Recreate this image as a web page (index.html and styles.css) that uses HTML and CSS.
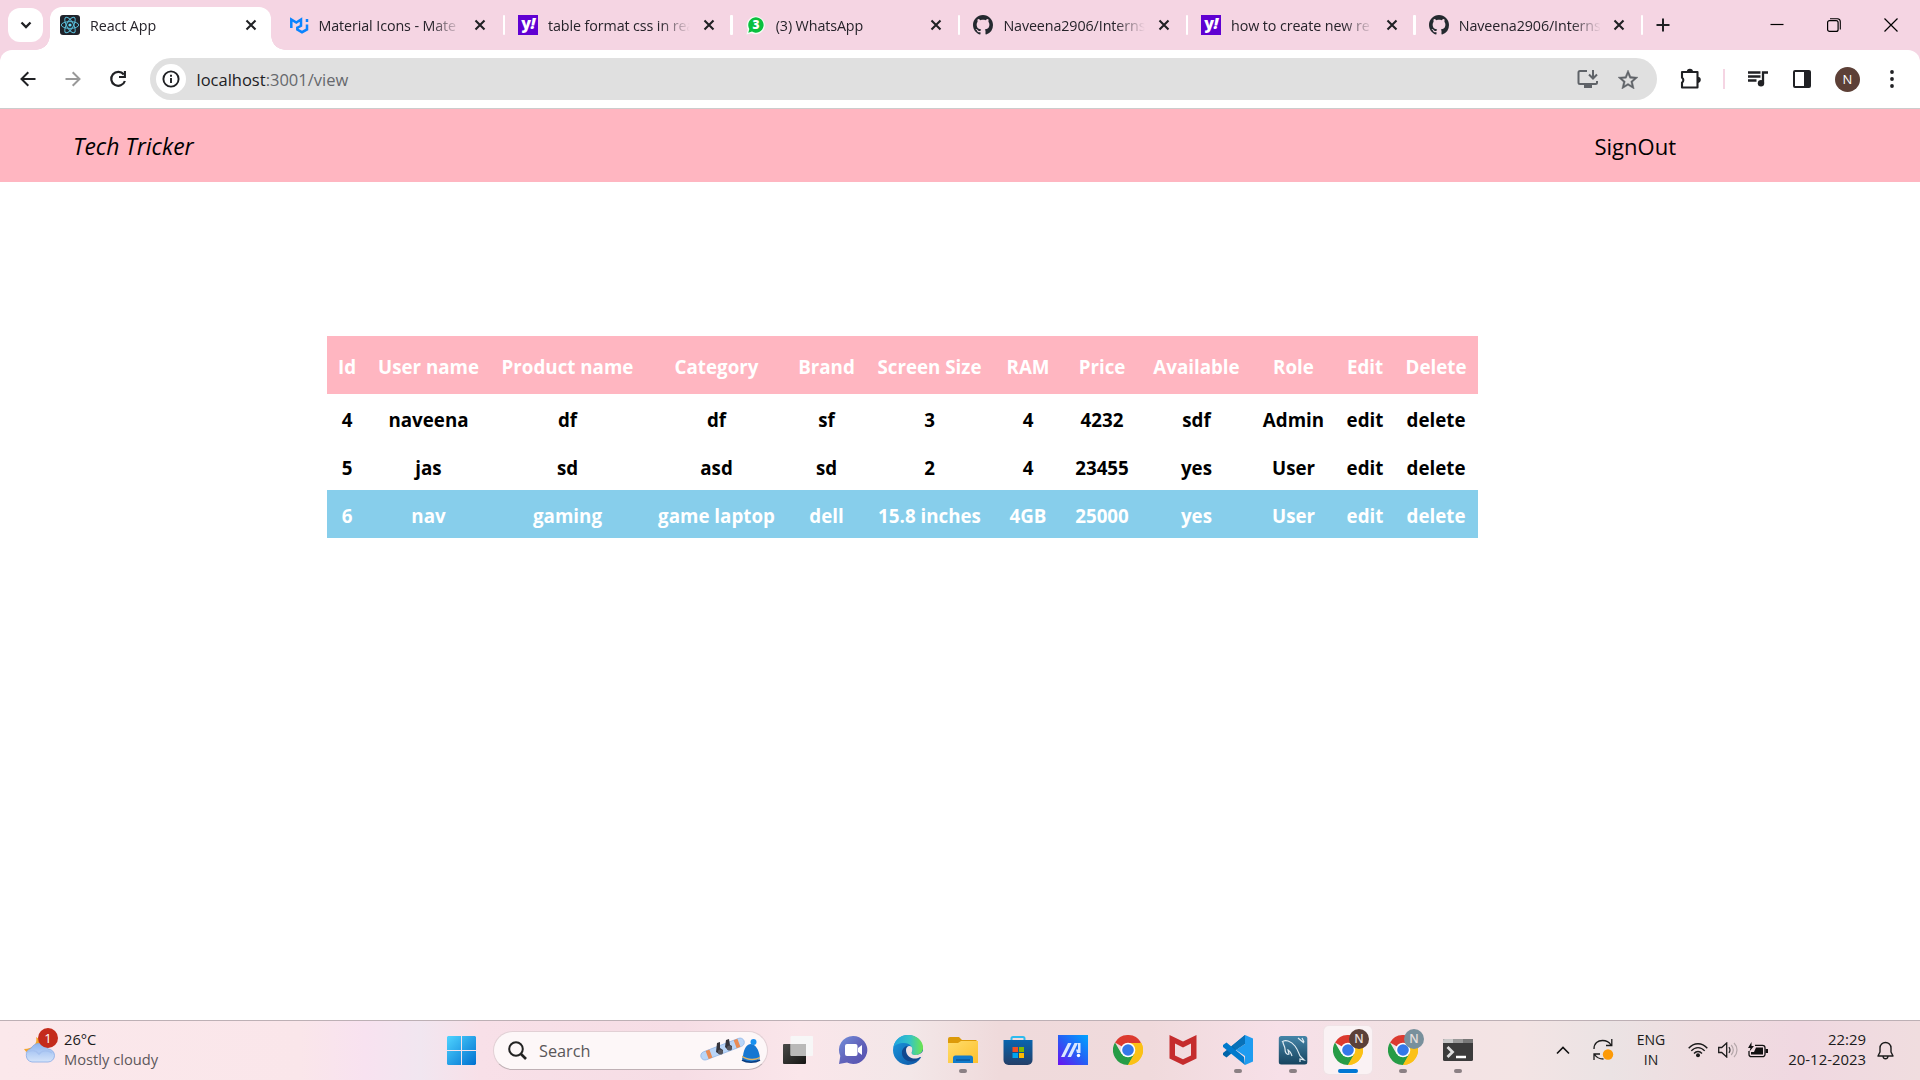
FILE: index.html
```html
<!DOCTYPE html>
<html lang="en">
<head>
<meta charset="utf-8">
<title>React App</title>
<link rel="stylesheet" href="styles.css">
</head>
<body>
<svg class="defs" width="0" height="0" aria-hidden="true">
  <linearGradient id="edgeA" x1="0" y1="0" x2="1" y2="0"><stop offset="0" stop-color="#1fa4e0"/><stop offset=".55" stop-color="#35c4c6"/><stop offset="1" stop-color="#6ee64a"/></linearGradient>
  <linearGradient id="edgeB" x1="0" y1="0" x2="1" y2="1"><stop offset="0" stop-color="#1b9de2"/><stop offset="1" stop-color="#0d4fa0"/></linearGradient>
  <linearGradient id="win" x1="0" y1="0" x2="1" y2="1"><stop offset="0" stop-color="#4fd4ff"/><stop offset="1" stop-color="#0070d0"/></linearGradient>
  <linearGradient id="cloud" x1="0" y1="0" x2="0" y2="1"><stop offset="0" stop-color="#8fb5ef"/><stop offset="1" stop-color="#d5e4fa"/></linearGradient>
  <linearGradient id="chat" x1="0" y1="0" x2="1" y2="1"><stop offset="0" stop-color="#7391dc"/><stop offset=".5" stop-color="#6264bb"/><stop offset="1" stop-color="#5650b0"/></linearGradient>
  <linearGradient id="folder" x1="0" y1="0" x2="1" y2="1"><stop offset="0" stop-color="#ffdc6b"/><stop offset="1" stop-color="#fdc02c"/></linearGradient>
  <linearGradient id="store" x1="0" y1="0" x2="0" y2="1"><stop offset="0" stop-color="#0864ae"/><stop offset="1" stop-color="#243f68"/></linearGradient>
  <linearGradient id="asus" x1="1" y1="0" x2="0" y2="1"><stop offset="0" stop-color="#00a5ff"/><stop offset=".5" stop-color="#2460f5"/><stop offset="1" stop-color="#6a10f0"/></linearGradient>
  <linearGradient id="sql" x1="0" y1="0" x2="0" y2="1"><stop offset="0" stop-color="#4585a8"/><stop offset="1" stop-color="#17445f"/></linearGradient>
  <linearGradient id="dark" x1="0" y1="0" x2="1" y2="1"><stop offset="0" stop-color="#4a4a48"/><stop offset="1" stop-color="#161614"/></linearGradient>
  <symbol id="x" viewBox="0 0 12 12"><path d="M1.5 1.5l9 9M10.500 1.500l-9 9" stroke="#202124" stroke-width="2.100"/></symbol>
  <symbol id="github" viewBox="0 0 16 16"><path fill="#24292f" d="M8 0C3.580 0 0 3.580 0 8c0 3.540 2.290 6.530 5.470 7.590.4.070.55-.17.55-.38 0-.19-.01-.82-.01-1.490-2.010.37-2.530-.49-2.690-.94-.09-.23-.48-.94-.82-1.130-.28-.15-.68-.52-.01-.53.63-.01 1.080.58 1.230.82.72 1.210 1.870.87 2.330.66.070-.52.28-.87.51-1.070-1.780-.2-3.640-.89-3.640-3.950 0-.87.31-1.590.82-2.150-.08-.2-.36-1.020.08-2.120 0 0 .67-.21 2.200.82.64-.18 1.320-.27 2-.27s1.360.09 2 .27c1.530-1.040 2.200-.82 2.200-.82.44 1.100.16 1.920.08 2.120.51.56.82 1.270.82 2.150 0 3.070-1.870 3.750-3.650 3.950.29.25.54.73.54 1.480 0 1.070-.01 1.930-.01 2.200 0 .21.15.46.55.38A8.010 8.010 0 0 0 16 8c0-4.420-3.580-8-8-8z"/></symbol>
  <symbol id="chrome" viewBox="0 0 30 30">
    <path fill="#dc3a2f" d="M15 15L2 7.500A15 15 0 0 1 28 7.500z"/><path fill="#fbc116" d="M15 15L28 7.500A15 15 0 0 1 15 30z"/><path fill="#269c46" d="M2 7.500A15 15 0 0 0 15 30L21.500 18.700 8.500 18.700z"/>
    <path fill="#dc3a2f" d="M15 8h13.260L25 8z"/><path fill="#fbc116" d="M15 8h13.300A15 15 0 0 1 15 30l6.300-11z"/>
    <circle cx="15" cy="15" r="7.300" fill="#fff"/><circle cx="15" cy="15" r="5.800" fill="#3478e8"/></symbol>
</svg>

<div class="tabstrip">
  <button class="tab-search"><svg width="12" height="8" viewBox="0 0 12 8"><path d="M1.500 1.500L6 6l4.500-4.500" fill="none" stroke="#202124" stroke-width="2.300"/></svg></button>
  <div class="tab active">
    <svg class="fav" viewBox="0 0 20 20"><rect width="20" height="20" rx="3" fill="#20232a"/><g fill="none" stroke="#58b9d4" stroke-width="1"><ellipse cx="10" cy="10" rx="8.700" ry="3.400"/><ellipse cx="10" cy="10" rx="8.700" ry="3.400" transform="rotate(60 10 10)"/><ellipse cx="10" cy="10" rx="8.700" ry="3.400" transform="rotate(120 10 10)"/></g><circle cx="10" cy="10" r="1.600" fill="#61dafb"/></svg>
    <span class="title">React App</span><svg class="close"><use href="#x"/></svg>
  </div>
  <div class="tab mui">
    <svg class="fav" viewBox="0 0 20 20"><g fill="none" stroke="#0a84ff" stroke-width="2.500"><path d="M2.300 13V4.500l5 3 4.700-3v6.300L8 13"/><path d="M8.300 11.800v2.700l4.700 2.700 5-2.800V9.500"/><path d="M18 4v3"/></g></svg>
    <span class="title">Material Icons - Mate</span><svg class="close"><use href="#x"/></svg>
  </div>
  <div class="tab">
    <span class="fav yahoo">y<i>!</i></span>
    <span class="title">table format css in rea</span><svg class="close"><use href="#x"/></svg>
  </div>
  <div class="tab">
    <span class="fav"><svg width="20" height="20" viewBox="0 0 20 20"><path d="M.5 19.500l1.300-5A9 9 0 1 1 5.500 18.200z" fill="#f4fff6"/><path d="M2.300 17.700l1-3.800a7.700 7.700 0 1 1 2.700 2.700z" fill="#0ac03f"/><text x="10" y="14.300" text-anchor="middle" class="wa">3</text></svg></span>
    <span class="title">(3) WhatsApp</span><svg class="close"><use href="#x"/></svg>
  </div>
  <div class="tab">
    <svg class="fav"><use href="#github"/></svg>
    <span class="title">Naveena2906/Interns</span><svg class="close"><use href="#x"/></svg>
  </div>
  <div class="tab">
    <span class="fav yahoo">y<i>!</i></span>
    <span class="title">how to create new re</span><svg class="close"><use href="#x"/></svg>
  </div>
  <div class="tab">
    <svg class="fav"><use href="#github"/></svg>
    <span class="title">Naveena2906/Interns</span><svg class="close"><use href="#x"/></svg>
  </div>
  <svg class="plus" width="14" height="14"><path d="M7 .5v13M.5 7h13" stroke="#202124" stroke-width="2"/></svg>
  <div class="window-buttons">
    <svg width="14" height="14"><path d="M.5 6.500h13" stroke="#000" stroke-width="1.200"/></svg>
    <svg width="14" height="14"><rect x=".6" y="2.600" width="10.500" height="10.800" rx="2" fill="none" stroke="#000" stroke-width="1.200"/><path d="M3 .7h7.500a3 3 0 0 1 2.800 3V11.500" fill="none" stroke="#000" stroke-width="1.100"/></svg>
    <svg width="14" height="14"><path d="M.5.5l13 13M13.500.5l-13 13" stroke="#000" stroke-width="1.200"/></svg>
  </div>
</div>

<div class="toolbar">
  <div class="nav">
    <svg width="16" height="16"><path d="M15.500 8H2M8.300 1.200L1.500 8l6.800 6.800" fill="none" stroke="#202124" stroke-width="2"/></svg>
    <svg width="16" height="16"><path d="M.5 8H14M7.700 1.200L14.500 8l-6.800 6.800" fill="none" stroke="#999" stroke-width="2"/></svg>
    <svg width="18" height="18"><path d="M14.800 4.500A7 7 0 1 0 15.900 11" fill="none" stroke="#202124" stroke-width="2.200"/><path d="M15.900 1v6H10" fill="none" stroke="#202124" stroke-width="2.100"/></svg>
  </div>
  <div class="omnibox">
    <span class="site-info"><svg width="18" height="18"><circle cx="9" cy="9" r="7.600" fill="none" stroke="#202124" stroke-width="1.900"/><path d="M9 8v5M9 4.700v2" stroke="#202124" stroke-width="1.900"/></svg></span>
    <span class="url"><b>localhost</b>:3001/view</span>
    <svg width="22" height="20"><path d="M10 2H3a1.500 1.500 0 0 0-1.500 1.500v10A1.500 1.500 0 0 0 3 15h15.500a1.500 1.500 0 0 0 1.500-1.500V12" fill="none" stroke="#5f6368" stroke-width="2"/><path d="M7 15h8v4H7z" fill="#5f6368"/><path d="M16 1v8M12 5.500l4 4 4-4" fill="none" stroke="#5f6368" stroke-width="2"/></svg>
    <svg width="20" height="19" viewBox="2 2 20 19"><path fill="#5f6368" stroke="#5f6368" stroke-width=".4" d="M22 9.240l-7.190-.62L12 2 9.190 8.630 2 9.240l5.460 4.730L5.820 21 12 17.270 18.180 21l-1.630-7.030L22 9.240zM12 15.400l-3.760 2.270 1-4.280-3.320-2.880 4.380-.38L12 6.100l1.710 4.040 4.380.38-3.320 2.880 1 4.280L12 15.400z"/></svg>
  </div>
  <div class="actions">
    <svg width="22" height="22"><path d="M3.500 4H17.500V19.500H2v-5a3 3 0 0 0 0-5V4z" fill="none" stroke="#202124" stroke-width="2.100" stroke-linejoin="round"/><path d="M6.800 4a3.100 3.300 0 0 1 6.200 0zM17.500 8.700a3.300 3.100 0 0 1 0 6.200z" fill="#202124"/></svg>
    <i class="rule"></i>
    <svg width="20" height="16"><path d="M0 1.500h12.500M0 5.500h12.500M0 9.500h8.500" stroke="#202124" stroke-width="2.300"/><path d="M15 12V1.500h5" fill="none" stroke="#202124" stroke-width="2.300"/><circle cx="13" cy="12.200" r="3.200" fill="#202124"/></svg>
    <svg width="18" height="18"><rect x="1" y="1" width="16" height="16" rx="1" fill="none" stroke="#202124" stroke-width="2"/><path d="M11 1h6v16h-6z" fill="#202124"/></svg>
    <span class="avatar">N</span>
    <svg width="4" height="18"><g fill="#202124"><circle cx="2" cy="2" r="1.900"/><circle cx="2" cy="9" r="1.900"/><circle cx="2" cy="16" r="1.900"/></g></svg>
  </div>
</div>

<main>
  <header class="site-header"><em class="brand">Tech Tricker</em><a class="signout">SignOut</a></header>
  <table class="products">
    <colgroup><col class="c1"><col class="c2"><col class="c3"><col class="c4"><col class="c5"><col class="c6"><col class="c7"><col class="c8"><col class="c9"><col class="c10"><col class="c11"><col class="c12"></colgroup>
    <thead><tr><th>Id</th><th>User name</th><th>Product name</th><th>Category</th><th>Brand</th><th>Screen Size</th><th>RAM</th><th>Price</th><th>Available</th><th>Role</th><th>Edit</th><th>Delete</th></tr></thead>
    <tbody>
      <tr><td>4</td><td>naveena</td><td>df</td><td>df</td><td>sf</td><td>3</td><td>4</td><td>4232</td><td>sdf</td><td>Admin</td><td>edit</td><td>delete</td></tr>
      <tr><td>5</td><td>jas</td><td>sd</td><td>asd</td><td>sd</td><td>2</td><td>4</td><td>23455</td><td>yes</td><td>User</td><td>edit</td><td>delete</td></tr>
      <tr class="hover"><td>6</td><td>nav</td><td>gaming</td><td>game laptop</td><td>dell</td><td>15.8 inches</td><td>4GB</td><td>25000</td><td>yes</td><td>User</td><td>edit</td><td>delete</td></tr>
    </tbody>
  </table>
</main>

<footer class="taskbar">
  <div class="weather">
    <span class="weather-icon"><svg width="32" height="32"><path d="M12 4c2 6-3 12-12 12 3 5 8 7 13 4l8-10z" fill="#f3a52b"/><path d="M8 29a7 7 0 0 1-1-13.500A9.500 9.500 0 0 1 24 16a6.500 6.500 0 0 1 0 13z" fill="url(#cloud)" stroke="#86a9e6" stroke-width=".8"/><path d="M2 20c5-4 10-3 13 1 3-4 9-4 13-1" fill="none" stroke="#a5c1ef" stroke-width="1.500"/></svg><b>1</b></span>
    <div class="forecast"><p class="dark">26°C</p><p>Mostly cloudy</p></div>
  </div>
  <div class="center">
    <svg class="start" width="29" height="29"><path fill="url(#win)" d="M1 0h13v14H0V1zM15 0h13l1 1v13H15zM0 15h14v14H1l-1-1zM15 15h14v13l-1 1H15z"/></svg>
    <div class="search">
      <svg width="19" height="19"><circle cx="8" cy="8" r="6.800" fill="none" stroke="#222" stroke-width="2"/><path d="M13 13l5 5" stroke="#222" stroke-width="2.600"/></svg>
      <span>Search</span>
      <svg width="62" height="28"><g transform="rotate(-21 22 13)"><rect x="-.5" y="9" width="46" height="8.500" rx="4.200" fill="#b9d5f8" stroke="#90b4e5" stroke-width=".7"/><path d="M6 9h4v8.500H6zM36 9h4v8.500h-4z" fill="#e98b55"/></g><path d="M17 7l3-1v6l3 2v3l-4 1-3-2zM26 4l3-1 1 6 2 1v3l-4 1-3-3z" fill="#34343c"/><circle cx="20.500" cy="16" r="2.600" fill="#55555e"/><circle cx="29.500" cy="12" r="2.600" fill="#55555e"/><path d="M43 20c1-8 4-12 8-12s8 5 9 14c-5 6-14 5-18 1z" fill="#1677d2"/><circle cx="53.500" cy="6" r="3" fill="#1890f0"/><path d="M42 19.500c4 3.500 13 4.500 18 1v1.500c-5 3.500-14 2.500-18-1z" fill="#dfb568"/><path d="M42 24c5 3 13 3 18 0" stroke="#0b3d80" stroke-width="1.500" fill="none"/></svg>
    </div>
    <div class="apps">
      <span class="app"><svg width="30" height="30"><rect y="9" width="23" height="20" rx="1" fill="url(#dark)"/><rect x="7.500" y="1" width="22.500" height="20" rx="1" fill="#f7f7f7"/><path d="M8 9h15v12H8z" fill="#b9b9b8"/></svg></span>
      <span class="app"><svg width="30" height="30"><path d="M15 1a14 14 0 1 1-6 26.500L1 29l1.300-8A14 14 0 0 1 15 1z" fill="url(#chat)"/><rect x="7" y="9" width="12.500" height="12" rx="2" fill="#fff"/><path d="M20 13l4-3v10l-4-3z" fill="#fff"/></svg></span>
      <span class="app"><svg width="30" height="30"><circle cx="15" cy="15" r="15" fill="url(#edgeB)"/><path d="M.5 12C2 4 8 0 15 0c9 0 15 6 15 12.500C30 18 26 20 22 20c-3 0-4-1-3-3 2-4-2-9-8-9C6 8 2 10 .5 12z" fill="url(#edgeA)"/><path d="M9 16c-1 7 5 12 13 10 3-1 5-3 5.500-4C20 25 13 21 13 15c0-2 1-3 2-4-3 0-5 2-6 5z" fill="#11488f"/><path d="M13 15c0-2 1.500-4 3.500-4 2.500 0 3.500 3 2.500 5.500-1 2 0 3.500 3.500 3.500 3 0 6-1.200 7.500-4v7l-3-1c-6 4-14 0-14-7z" fill="#f1e1e3"/></svg></span>
      <span class="app open"><svg width="30" height="30"><path d="M0 4a2 2 0 0 1 2-2h9l3 3h14l2 2v6H0z" fill="#dc9a09"/><path d="M0 8h10l3-2h17v22H0z" fill="url(#folder)"/><path d="M5 28v-5a2.500 2.500 0 0 1 2.500-2.500h15A2.500 2.500 0 0 1 25 23v5z" fill="#127bcb"/><path d="M8 25h14" stroke="#09508e" stroke-width="1.200"/></svg></span>
      <span class="app"><svg width="30" height="30"><path d="M8.500 6V3.500A1.500 1.500 0 0 1 10 2h10a1.500 1.500 0 0 1 1.500 1.500V6" fill="none" stroke="#2dbbee" stroke-width="2"/><path d="M.5 5h29v20a5 5 0 0 1-5 5h-19a5 5 0 0 1-5-5z" fill="url(#store)"/><path d="M9.500 12H15v5H9.500z" fill="#f25022"/><path d="M16 12h5v5h-5z" fill="#7fba00"/><path d="M9.500 18H15v5H9.500z" fill="#00a4ef"/><path d="M16 18h5v5h-5z" fill="#ffb900"/></svg></span>
      <span class="app"><svg width="30" height="30"><rect width="30" height="30" fill="url(#asus)"/><path d="M3 22L10 8h3.500L6.500 22zM9.500 22l7-14H20l-7 14zM20 8h2.500v10H19l-1-3.500h2z" fill="#d9e8ff"/><circle cx="20.500" cy="20.500" r="1.700" fill="#fff"/></svg></span>
      <span class="app"><svg width="30" height="30"><use href="#chrome"/></svg></span>
      <span class="app"><svg width="30" height="30"><path d="M1.500 0L15 6.500 28.500 0v23.500L15 30 1.500 23.500zM7 8.500v12l8 3.800 8-3.800v-12l-8 4z" fill="#c52c2d" fill-rule="evenodd"/></svg></span>
      <span class="app open"><svg width="30" height="30"><path d="M22 0l-1 8L3.500 22.500 0 20v-2z" fill="#0065a9"/><path d="M22 30l-1-8L3.500 7.500 0 10v2z" fill="#007acc"/><path d="M22 0l8 3.500v23L22 30V9l-9 6 9 6z" fill="#1f9cf0"/><path d="M22 0v9l-9 6-4-4z" fill="#0872b9"/></svg></span>
      <span class="app open"><svg width="30" height="30"><rect x=".8" y="1" width="28.500" height="28.500" rx="2.500" fill="url(#sql)"/><path d="M4 7c3-3 9-1 13 4 3 4 4 8 5 10l4 4-4-1v3M5 7c0 3 2 4 2 7 0 4 2 6 4 5l-1-4c2 1 3 3 4 6M20 3l6 5M24 3l2 4" fill="none" stroke="#e1ecf2" stroke-width="1.200"/></svg></span>
      <span class="app open current"><svg width="30" height="30"><use href="#chrome"/></svg><b class="badge brown">N</b></span>
      <span class="app open"><svg width="30" height="30"><use href="#chrome"/></svg><b class="badge gray">N</b></span>
      <span class="app open"><svg width="30" height="30"><rect y="4" width="30" height="22" rx="1.500" fill="#3b3b3b"/><path d="M0 8V5.500A1.500 1.500 0 0 1 1.500 4H10v4z" fill="#c8c8c8"/><path d="M10 4h10v4H10z" fill="#999"/><path d="M20 4h10v4H20z" fill="#777"/><path d="M4.500 12l5 5-5 5" stroke="#ddd" stroke-width="2.800" fill="none"/><path d="M13 22h10" stroke="#fff" stroke-width="2.500"/></svg></span>
    </div>
  </div>
  <div class="tray">
    <svg width="14" height="9"><path d="M1 7.500l6-6 6 6" fill="none" stroke="#111" stroke-width="1.600"/></svg>
    <svg class="sync" width="22" height="22"><path d="M1 10C1 4 5 1.500 9.500 1.500c4 0 7 2 8.500 4.500M18.800 0v6.500H13M1 21v-6h6M1.500 15.500c2 3 5 4.500 9 4.500" fill="none" stroke="#1b1b1b" stroke-width="1.300"/><circle cx="15" cy="15.500" r="5.200" fill="#fc9a07"/></svg>
    <div class="lang"><p>ENG</p><p>IN</p></div>
    <svg class="wifi" width="20" height="16"><g fill="none" stroke="#1b1b1b" stroke-width="1.400"><path d="M.7 6.200c5.200-6 13.400-6 18.600 0M3.300 8.900c4-4.400 9.400-4.400 13.400 0M6 11.500c2.400-2.600 5.600-2.600 8 0"/></g><circle cx="10" cy="13.200" r="2" fill="#1b1b1b"/></svg>
    <svg class="sound" width="21" height="16"><path d="M.7 5.500h3l5-4.500v14l-5-4.500h-3z" fill="none" stroke="#1b1b1b" stroke-width="1.300"/><path d="M11 5c1.300 2 1.300 4 0 6" fill="none" stroke="#333" stroke-width="1.200"/><path d="M13.200 3c2.500 3 2.500 7 0 10M16 1c4 4 4 10 0 14" fill="none" stroke="#b5a7aa" stroke-width="1.200"/></svg>
    <svg class="battery" width="20" height="16"><path d="M7 3.300h7.500A2.500 2.500 0 0 1 17 5.800v6.400a2.500 2.500 0 0 1-2.500 2.500H3.500A2.500 2.500 0 0 1 1 12.200V9" fill="none" stroke="#111" stroke-width="1.300"/><path d="M8 5.500h7v7H3V10h3z" fill="#111"/><path d="M17.500 7H20v4h-2.500zM3.500 0L0 6h2.500L1.500 9.500 6 4H3.500z" fill="#111"/></svg>
    <div class="clock"><p>22:29</p><p>20-12-2023</p></div>
    <svg width="17" height="19"><path d="M1 15h15l-2-4V7A5.500 5.500 0 0 0 3 7v4zM6 15.500c.5 3 4.500 3 5 0" fill="none" stroke="#1b1b1b" stroke-width="1.400" stroke-linejoin="round"/></svg>
  </div>
</footer>
</body>
</html>
```
FILE: styles.css
```css
* { box-sizing: border-box; }
body { margin: 0; width: 1920px; height: 1080px; overflow: hidden; display: flex; flex-direction: column; background: #fff; color: #000; font-family: "Open Sans", "Noto Sans", sans-serif; }
p { margin: 0; }
svg { display: block; flex: none; }
.defs { position: absolute; }

/* tab strip */
.tabstrip { flex: none; height: 50px; display: flex; align-items: center; background: #f5d5e3; position: relative; }
.tab-search { margin: 0 7px 0 8px; width: 35px; height: 34px; border: 0; border-radius: 12px; background: #fff; display: grid; place-items: center; padding: 0; }
.tab { width: 227.700px; height: 43px; margin-top: 7px; padding: 0 18px 7px 13px; display: flex; align-items: center; position: relative; font-size: 14.300px; color: #26232a; }
.tab.active { width: 221px; padding-left: 10px; padding-right: 14px; background: #fff; border-radius: 12px 12px 0 0; }
.tab.active::before, .tab.active::after { content: ""; position: absolute; bottom: 0; width: 14px; height: 14px; }
.tab.active::before { left: -14px; background: radial-gradient(circle at 0 0, transparent 13.500px, #fff 14px); }
.tab.active::after { right: -14px; background: radial-gradient(circle at 100% 0, transparent 13.500px, #fff 14px); }
.tab.mui { width: 234px; padding-left: 17.500px; padding-right: 19px; }
.tab:not(.active)::after { content: ""; position: absolute; right: 0; top: 8px; width: 2.500px; height: 20px; background: #fff; border-radius: 1px; }
.fav { width: 20px; height: 20px; flex: none; }
.title { margin-left: 10px; width: 142px; white-space: nowrap; letter-spacing: -.1px; -webkit-mask-image: linear-gradient(90deg, #000 112px, transparent 142px); mask-image: linear-gradient(90deg, #000 112px, transparent 142px); }
.close { width: 12px; height: 12px; margin-left: auto; }
.yahoo { background: #6001d2; color: #fff; font-size: 16px; line-height: 17px; font-weight: 800; text-align: center; letter-spacing: -.5px; }
.wa { font: 800 12px "Open Sans", sans-serif; fill: #fff; }
.plus { margin-left: 13px; }
.window-buttons { margin-left: auto; margin-right: 22px; display: flex; gap: 43px; }

/* toolbar */
.toolbar { flex: none; height: 59px; display: flex; align-items: center; border-bottom: 1px solid #ccc; background: linear-gradient(#f5d5e3, #f5d5e3) top / 100% 12px no-repeat; position: relative; z-index: 0; }
.toolbar::before { content: ""; position: absolute; inset: 0; background: #fff; border-radius: 12px 12px 0 0; z-index: -1; }
.nav { width: 150px; padding-left: 20px; display: flex; align-items: center; gap: 28.500px; }
.omnibox { width: 1507px; height: 42px; border-radius: 21px; background: #e0e0e0; display: flex; align-items: center; padding: 0 19px 0 6px; }
.site-info { width: 30px; height: 30px; border-radius: 50%; background: #fff; display: grid; place-items: center; margin-right: 10.500px; }
.url { flex: 1; font-size: 16.500px; color: #66686c; }
.url b { font-weight: 400; color: #202124; }
.omnibox svg + svg { margin-left: 19px; }
.actions { display: flex; align-items: center; flex: 1; padding-left: 23px; }
.rule { width: 2px; height: 20px; background: #f5d5e3; margin: 0 23px 0 21px; }
.actions svg + svg { margin-left: 25px; }
.avatar { width: 25px; height: 25px; margin: 0 30px 0 24px; border-radius: 50%; background: #5d4037; color: #fff; font-size: 13px; line-height: 25px; text-align: center; }

/* page */
main { flex: 1; min-height: 0; }
.site-header { height: 73px; background: #ffb6c1; display: flex; align-items: center; justify-content: space-between; padding: 0 244px 0 73px; font-size: 22px; }
.brand { font-size: 22.900px; padding-top: 2px; }
.products { margin: 154px 0 0 327px; width: 1151px; table-layout: fixed; border-collapse: collapse; text-align: center; font-size: 18.750px; font-weight: 700; white-space: nowrap; }
.products th, .products td { padding: 3px 0 0; height: 48px; line-height: 24px; }
.products th { height: 58px; color: #fff; background: #ffb6c1; }
.hover td { color: #fff; background: #87ceeb; }
.c1 { width: 40px; } .c2 { width: 123px; } .c3 { width: 155px; } .c4 { width: 143px; } .c5 { width: 77px; } .c6 { width: 129px; }
.c7 { width: 68px; } .c8 { width: 80px; } .c9 { width: 109px; } .c10 { width: 85px; } .c11 { width: 58px; } .c12 { width: 84px; }

/* taskbar */
.taskbar { flex: none; height: 60px; padding-bottom: 1px; display: flex; align-items: center; border-top: 1px solid #bdb0b5; font-size: 14px; line-height: 20px; color: #1b1b1b; white-space: nowrap;
  background: linear-gradient(90deg, #fbe8eb 0, #fae6ea 300px, #f8e2f0 365px, #f1e6f0 420px, #f8e0e8 480px, #f6dde5 680px, #fae6ea 800px, #f3e7e8 910px, #efdadb 1000px, #f0dadc 1150px, #f7e0e8 1280px, #f3e2e4 1400px, #f3e4e4 1520px, #ebe3e4 1610px, #efdde0 1700px, #f0d8e1 1800px, #f0dddf 1920px); }
.weather { width: 447px; display: flex; align-items: center; padding-left: 24px; color: #5d585b; }
.forecast { font-size: 14.700px; padding-bottom: 3px; }
.weather-icon { position: relative; width: 40px; height: 36px; padding-top: 1px; }
.weather-icon b { position: absolute; left: 14px; top: -4px; width: 20px; height: 20px; border-radius: 50%; background: #c42b1c; color: #fff; text-align: center; font-size: 13px; font-weight: 400; line-height: 20px; }
.dark { color: #1b1b1b; }
.center { display: flex; align-items: center; }
.search { width: 275px; height: 39px; margin-left: 17px; border: 1px solid #e2d0d5; border-bottom-color: #bfb0b5; border-radius: 20px; background: #fdf7f8; display: flex; align-items: center; padding: 0 5px 0 14px; font-size: 16.300px; color: #5a5658; }
.search span { flex: 1; margin-left: 12px; padding-top: 1px; }
.apps { display: flex; gap: 7px; margin-left: 6px; }
.app { position: relative; width: 48px; height: 48px; display: grid; place-items: center; border-radius: 5px; }
.open::after { content: ""; position: absolute; bottom: 1px; left: 20px; width: 8px; height: 4px; border-radius: 2px; background: #8b8084; }
.current { background: #faf2f4; box-shadow: 0 0 0 1px #f0e3e6; }
.current::after { left: 14px; width: 20px; background: #0078d4; }
.badge { position: absolute; left: 25px; top: 3px; width: 20px; height: 20px; border-radius: 50%; color: #e6dedb; font-size: 12px; line-height: 20px; text-align: center; font-weight: 600; }
.brown { background: #5b4038; }
.gray { background: #78909c; }
.tray { margin-left: auto; padding-right: 26px; display: flex; align-items: center; }
.sync { margin-left: 23px; }
.lang { width: 38px; margin-left: 17px; text-align: center; }
.wifi { margin-left: 18px; }
.sound { margin-left: 10px; }
.battery { margin-left: 9px; }
.clock { width: 88px; margin: 0 11px 0 10px; padding-bottom: 3px; text-align: right; font-size: 14.900px; }
```
